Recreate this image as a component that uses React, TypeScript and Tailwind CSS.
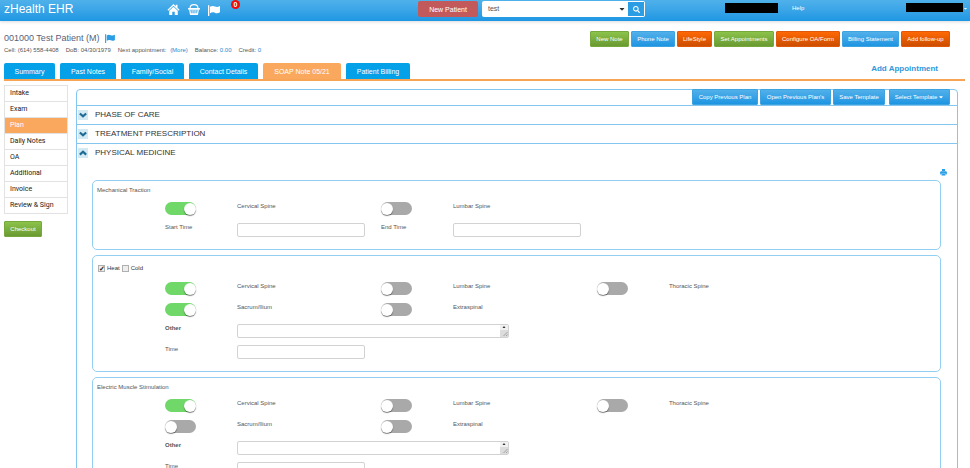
import React, { useId, useState } from "react"
import { FaCaretDown, FaSearch } from "react-icons/fa"
import { cva } from "class-variance-authority"
import clsx from "clsx"

type Tone = "blue" | "green" | "orange"

const button = cva(
	"flex shrink-0 items-center justify-center whitespace-nowrap rounded-[1px] border bg-linear-to-b text-[6px] leading-none text-white",
	{
		variants: {
			tone: {
				blue: "border-[#3fa3df] from-[#50b0ea] to-[#1c95e2]",
				green: "border-[#76a83b] from-[#8bc34a] to-[#6a9a32]",
				orange: "border-[#e0590a] from-[#ff6804] to-[#cc4e00]",
			},
		},
	},
)

const actions: { label: string; tone: Tone; width: string }[] = [
	{ label: "New Note", tone: "green", width: "w-[39px]" },
	{ label: "Phone Note", tone: "blue", width: "w-[44px]" },
	{ label: "LifeStyle", tone: "orange", width: "w-[35px]" },
	{ label: "Set Appointments", tone: "green", width: "w-[60px]" },
	{ label: "Configure OA/Form", tone: "orange", width: "w-[64px]" },
	{ label: "Billing Statement", tone: "blue", width: "w-[57px]" },
	{ label: "Add follow-up", tone: "orange", width: "w-[49px]" },
]

const tabs = [
	{ label: "Summary", width: "w-[51px]" },
	{ label: "Past Notes", width: "w-[56px]" },
	{ label: "Family/Social", width: "w-[63px]" },
	{ label: "Contact Details", width: "w-[69px]" },
	{ label: "SOAP Note 05/21", width: "w-[78px]" },
	{ label: "Patient Billing", width: "w-[64px]" },
]

const menu = ["Intake", "Exam", "Plan", "Daily Notes", "OA", "Additional", "Invoice", "Review & Sign"]

const HomeIcon = ({ className }: { className?: string }) => (
	<svg viewBox="0 0 24 22" fill="currentColor" className={className} aria-hidden="true">
		<path d="M12 0l4.500 4.300V1.500h3.500v6.200l4 4-1.500 1.600L12 3.300 1.500 13.300 0 11.700z" />
		<path d="M12 5.300l8.500 8V22h-6v-6.500h-5V22h-6v-8.700z" />
	</svg>
)

const FlagIcon = ({ className }: { className?: string }) => (
	<svg viewBox="0 0 24 22" fill="currentColor" className={className} aria-hidden="true">
		<path d="M0 1.500C0 .6.6 0 1.300 0s1.300.6 1.300 1.500V22H0z" />
		<path d="M4 3.500C8 1 11 1.500 14 3c3.500 1.600 6 1 10-1v12.500c-4 2.500-7 2.500-10.500 1-3-1.300-5.500-1.300-9.500 1z" />
	</svg>
)

const BasketIcon = ({ className }: { className?: string }) => (
	<svg viewBox="0 0 24 22" fill="none" stroke="currentColor" className={className} aria-hidden="true">
		<path d="M4 9C4 3.500 7 1.200 12 1.200S20 3.500 20 9" strokeWidth="2.200" />
		<path d="M1.500 9.500h21" strokeWidth="3.500" strokeLinecap="round" />
		<path d="M3.500 11l1.500 9.500h14L20.500 11" strokeWidth="2.500" strokeLinejoin="round" />
		<path d="M8.200 11v8M12 11v8M15.800 11v8" strokeWidth="1.800" />
		<path d="M4.500 20h15" strokeWidth="3" />
	</svg>
)

const PrintIcon = ({ className }: { className?: string }) => (
	<svg viewBox="0 0 14 14" className={className} aria-hidden="true">
		<path d="M4 0h6v4H4z" fill="#2b9de4" />
		<path d="M2 4h10l2 2v5H0V6z" fill="#5fb6ec" />
		<path d="M1 6h12v3H1z" fill="#2b9de4" />
		<path d="M3 9h8v5H3z" fill="#8fcbf2" />
		<path d="M4 10h6v2H4z" fill="#2b9de4" />
	</svg>
)

const Chevron = ({ open }: { open: boolean }) => (
	<svg viewBox="0 0 14 14" fill="none" stroke="currentColor" strokeWidth="3.800" className="size-2" aria-hidden="true">
		<path d={open ? "M1.500 9.800L7 4.800l5.500 5" : "M1.500 4.300L7 9.300l5.500-5"} />
	</svg>
)

const Header = () => (
	<header className="flex h-[21px] items-start bg-linear-to-b from-[#4fb1ea] to-[#1d97e3] pl-1 text-white shadow-[0_1px_3px_rgba(0,0,0,0.15)]">
		<h1 className="w-[163px] shrink-0 pt-[2px] text-[12px] leading-[14px]">zHealth EHR</h1>
		<nav className="flex shrink-0 items-start gap-2">
			<a href="#home" aria-label="Home" className="pt-1">
				<HomeIcon className="h-[11px] w-[13px]" />
			</a>
			<a href="#store" aria-label="Store" className="pt-1">
				<BasketIcon className="h-[11px] w-3" />
			</a>
			<a href="#flags" aria-label="Flags" className="pt-[5px]">
				<FlagIcon className="h-[11px] w-3" />
			</a>
			<span className="ml-[3px] flex size-[9px] items-center justify-center rounded-full bg-[#f00a0a] text-[7px] font-bold leading-none">
				0
			</span>
		</nav>
		<button
			type="button"
			className="ml-[178px] mt-px h-4 w-[60px] shrink-0 rounded-[2px] bg-[#c25a5c] text-[7px] leading-none text-white">
			New Patient
		</button>
		<form className="ml-1 mt-px flex h-4 w-[163px] shrink-0 rounded-[2px] bg-white p-px">
			<input
				type="text"
				aria-label="Search patients"
				defaultValue="test"
				className="min-w-0 flex-1 pl-[5px] text-[7px] text-[#555] outline-none"
			/>
			<button type="button" aria-label="Search options" className="w-3 text-[#333]">
				<FaCaretDown className="mx-auto size-2" />
			</button>
			<button type="submit" aria-label="Search" className="w-4 bg-[#2b9de4] text-white">
				<FaSearch className="mx-auto size-[7px]" />
			</button>
		</form>
		<div className="ml-auto flex shrink-0 items-start pt-[3px]">
			<span className="h-[10px] w-[53px] bg-black" />
			<a href="#help" className="ml-[14px] w-[114px] text-[6px] leading-[10px]">
				Help
			</a>
			<span className="h-[9px] w-[57px] bg-black" />
			<FaCaretDown className="mr-[2px] mt-[3px] size-[5px]" />
		</div>
	</header>
)

const PatientBar = () => (
	<section className="flex items-start justify-between pl-1 pr-5 pt-[10px]">
		<div>
			<h2 className="flex items-center gap-[6px] text-[9px] leading-[14px] text-[#56627a]">
				001000 Test Patient (M)
				<FlagIcon className="h-[9px] w-[10px] text-[#2b9de4]" />
			</h2>
			<p className="flex gap-[7px] text-[6px] leading-[10px] text-[#555]">
				<span>Cell: (614) 558-4408</span>
				<span>DoB: 04/30/1979</span>
				<span>
					Next appointment:{" "}
					<a href="#appointments" className="ml-[2px] text-[#2488d0]">
						(More)
					</a>
				</span>
				<span>
					Balance: <span className="text-[#2488d0]">0.00</span>
				</span>
				<span>
					Credit: <span className="text-[#2488d0]">0</span>
				</span>
			</p>
		</div>
		<div className="flex gap-[2px]">
			{actions.map(({ label, tone, width }) => (
				<button key={label} type="button" className={clsx(button({ tone }), "h-4", width)}>
					{label}
				</button>
			))}
		</div>
	</section>
)

const TabBar = () => {
	const [active, setActive] = useState("SOAP Note 05/21")

	return (
		<div className="ml-1 mr-[5px] mt-2 flex items-end justify-between border-b-2 border-[#f8a456]">
			<div className="flex gap-[5px]">
				{tabs.map(({ label, width }) => (
					<button
						key={label}
						type="button"
						onClick={() => setActive(label)}
						className={clsx(
							"h-4 whitespace-nowrap rounded-t-[2px] text-[7px] leading-none text-white",
							width,
							label === active ? "bg-[#f9a85e]" : "bg-[#04a0e8]",
						)}>
						{label}
					</button>
				))}
			</div>
			<a href="#add" className="mb-[5px] mr-[27px] text-[8px] font-bold leading-[10px] text-[#2f97dc]">
				Add Appointment
			</a>
		</div>
	)
}

const Sidebar = () => (
	<aside className="w-16 shrink-0">
		<ul className="border border-b-0 border-[#e2e2e2]">
			{menu.map((item) => (
				<li key={item} className="border-b border-[#e2e2e2]">
					<a
						href="#section"
						className={clsx(
							"block pl-[5px] font-['Roboto',sans-serif] text-[7px] leading-[15px]",
							item === "Plan" ? "bg-[#f9a85e] text-white" : "text-[#222]",
						)}>
						{item}
					</a>
				</li>
			))}
		</ul>
		<button type="button" className={clsx(button({ tone: "green" }), "mt-[7px] h-4 w-[38px]")}>
			Checkout
		</button>
	</aside>
)

const Row = ({ children }: { children: React.ReactNode }) => (
	<div className="grid h-[21px] grid-cols-[repeat(12,8.5%)] items-start pt-[2px] text-[6px] leading-2 text-[#555]">
		{children}
	</div>
)

interface ToggleProps {
	label: string
	on?: boolean
	first?: boolean
}

const Toggle = ({ label, on = false, first = false }: ToggleProps) => {
	const id = useId()
	const [checked, setChecked] = useState(on)

	return (
		<>
			<input
				id={id}
				type="checkbox"
				role="switch"
				checked={checked}
				onChange={() => setChecked(!checked)}
				className={clsx(
					"flex h-[13px] w-[31px] appearance-none items-center rounded-full bg-[#a9a9a9] before:size-3 before:rounded-full before:bg-white before:shadow-[0_1px_1px_rgba(0,0,0,0.5)] checked:justify-end checked:bg-[#6fd868]",
					first && "col-start-2",
				)}
			/>
			<label htmlFor={id} className="col-span-2">
				{label}
			</label>
		</>
	)
}

const TimeField = ({ label, first = false }: ToggleProps) => {
	const id = useId()

	return (
		<>
			<label htmlFor={id} className={clsx(first && "col-start-2")}>
				{label}
			</label>
			<div className="col-span-2 pr-4">
				<input id={id} type="text" className="block h-[14px] w-full rounded-[2px] border border-[#d2d2d2] px-1" />
			</div>
		</>
	)
}

const OtherField = () => {
	const id = useId()

	return (
		<Row>
			<label htmlFor={id} className="col-start-2 font-bold">
				Other
			</label>
			<div className="col-span-4 mr-4 flex h-[14px] rounded-[2px] border border-[#d2d2d2]">
				<textarea id={id} className="min-w-0 flex-1 resize-none overflow-hidden px-1 outline-none" />
				<svg viewBox="0 0 8 12" className="h-3 w-2" aria-hidden="true">
					<path d="M0 0h8v5H0z" fill="#f1f1f1" />
					<path d="M0 5h8v7H0z" fill="#dcdcdc" />
					<path d="M4 1l1.500 2h-3z" fill="#333" />
					<path d="M3.500 11l4-4M6 11l1.500-1.500" stroke="#888" strokeWidth="0.700" />
				</svg>
			</div>
		</Row>
	)
}

const TinyCheckbox = ({ id, defaultChecked }: { id: string; defaultChecked?: boolean }) => (
	<input
		id={id}
		type="checkbox"
		defaultChecked={defaultChecked}
		className="flex size-[7px] appearance-none items-center justify-center border border-[#b0b0b0] bg-[#eee] text-[7px] font-bold leading-none text-[#222] checked:before:content-['✓']"
	/>
)

const Card = ({ children }: { children: React.ReactNode }) => (
	<section className="rounded-[5px] border border-[#93cff2] pb-[7px]">{children}</section>
)

const CardTitle = ({ children }: { children: React.ReactNode }) => (
	<h4 className="h-[19px] pl-1 pt-1 text-[6px] leading-[10px] text-[#555]">{children}</h4>
)

const SpineFields = ({ sacrum = false }: { sacrum?: boolean }) => (
	<>
		<Row>
			<Toggle label="Cervical Spine" on first />
			<Toggle label="Lumbar Spine" />
			<Toggle label="Thoracic Spine" />
		</Row>
		<Row>
			<Toggle label="Sacrum/Ilium" on={sacrum} first />
			<Toggle label="Extraspinal" />
		</Row>
		<OtherField />
		<Row>
			<TimeField label="Time" first />
		</Row>
	</>
)

const AccordionHeader = ({ title, open = false }: { title: string; open?: boolean }) => (
	<h3>
		<button
			type="button"
			aria-expanded={open}
			className="flex h-[18px] w-full items-center gap-[7px] pl-px text-left text-[8px] text-[#333]">
			<span className="flex size-[10px] items-center justify-center bg-[#d3eaf5] text-[#1f6b93]">
				<Chevron open={open} />
			</span>
			{title}
		</button>
	</h3>
)

const PlanPanel = () => (
	<main className="mt-1 min-w-0 flex-1 divide-y divide-[#84c6f0] rounded-t-[4px] border border-[#84c6f0]">
		<div className="flex h-4 items-start justify-end gap-[2px] pr-[7px]">
			<button type="button" className={clsx(button({ tone: "blue" }), "-mt-px h-4 w-[66px]")}>
				Copy Previous Plan
			</button>
			<button type="button" className={clsx(button({ tone: "blue" }), "-mt-px h-4 w-[71px]")}>
				Open Previous Plan's
			</button>
			<button type="button" className={clsx(button({ tone: "blue" }), "-mt-px h-4 w-[52px]")}>
				Save Template
			</button>
			<button type="button" className={clsx(button({ tone: "blue" }), "-mt-px ml-[2px] h-4 w-[61px] gap-px")}>
				Select Template
				<FaCaretDown className="size-[6px]" />
			</button>
		</div>
		<AccordionHeader title="PHASE OF CARE" />
		<AccordionHeader title="TREATMENT PRESCRIPTION" />
		<div>
			<AccordionHeader title="PHYSICAL MEDICINE" open />
			<div className="pb-4 pl-[15px] pr-4">
				<div className="flex h-[18px] items-end justify-end">
					<button type="button" aria-label="Print" className="-mr-[6px] pb-1">
						<PrintIcon className="size-[7px]" />
					</button>
				</div>
				<div className="flex flex-col gap-[5px]">
					<Card>
						<CardTitle>Mechanical Traction</CardTitle>
						<Row>
							<Toggle label="Cervical Spine" on first />
							<Toggle label="Lumbar Spine" />
						</Row>
						<Row>
							<TimeField label="Start Time" first />
							<TimeField label="End Time" />
						</Row>
					</Card>
					<Card>
						<div className="flex h-6 items-center gap-[2px] pl-[5px] text-[6px] text-[#333]">
							<TinyCheckbox id="heat" defaultChecked />
							<label htmlFor="heat">Heat</label>
							<TinyCheckbox id="cold" />
							<label htmlFor="cold">Cold</label>
						</div>
						<SpineFields sacrum />
					</Card>
					<Card>
						<CardTitle>Electric Muscle Stimulation</CardTitle>
						<SpineFields />
					</Card>
				</div>
			</div>
		</div>
	</main>
)

const App = () => (
	<div className="min-h-screen bg-white font-['Liberation_Sans',Arial,sans-serif]">
		<Header />
		<PatientBar />
		<TabBar />
		<div className="flex items-start gap-2 pl-1 pr-3 pt-1">
			<Sidebar />
			<PlanPanel />
		</div>
	</div>
)

export default App
